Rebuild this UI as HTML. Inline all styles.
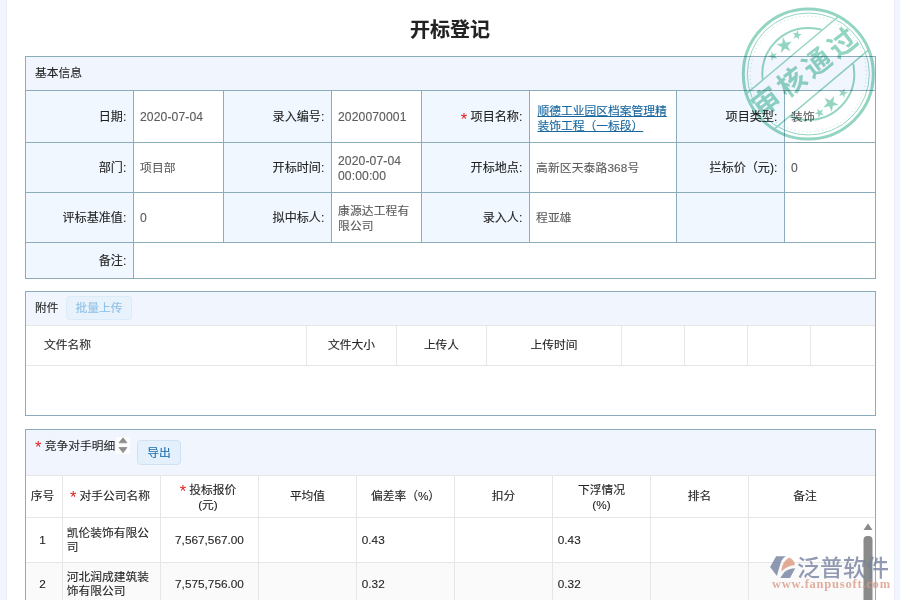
<!DOCTYPE html>
<html lang="zh-CN">
<head>
<meta charset="utf-8">
<title>开标登记</title>
<style>
*{box-sizing:border-box;margin:0;padding:0}
html,body{width:900px;height:600px;overflow:hidden;background:#fff}
body{position:relative;font-family:"Liberation Sans","Noto Sans CJK SC",sans-serif;font-size:11.75px;color:#2a2a2a;line-height:16px;-webkit-text-stroke:0.12px}
.strip-l{position:absolute;left:0;top:0;width:7px;height:600px;background:#f2f5fd;border-right:1px solid #eaedf5}
.strip-r{position:absolute;left:894px;top:0;width:6px;height:600px;background:#f2f5fd;border-left:1px solid #eaedf5}
h1{position:absolute;left:0;top:16px;width:900px;text-align:center;font-size:20px;line-height:28px;font-weight:bold;color:#222}
table{border-collapse:collapse;table-layout:fixed}
#basic{position:absolute;left:25px;top:56px;width:850px}
#basic td{border:1px solid #8badbb;vertical-align:middle;padding:0 6px}
#basic td.hd{background:#f1f5fe;height:34px;padding-left:9px;padding-bottom:2px;color:#262626}
#basic td.lb{background:#f0f7ff;text-align:right;color:#222;padding-right:6.7px;font-size:12.1px;-webkit-text-stroke:0.1px}
#basic td.v{color:#5c5c5c;background:#fff;line-height:15px;letter-spacing:0.15px}
#basic td.n{font-size:12.15px;letter-spacing:0.1px;padding-top:1px}
#basic td.two{padding-top:2px !important}
#basic td.lb .req{vertical-align:-4px}
#basic a{color:#17669f;text-decoration:underline;margin-left:1.5px;display:block;letter-spacing:0}
.req{color:#e02020;font-size:16.5px;line-height:10px;display:inline-block;vertical-align:-3px;margin-right:0;-webkit-text-stroke:0}
.sec{position:absolute;left:25px;width:851px;border:1px solid #8badbb;background:#fff;overflow:hidden}
.sec .bar{background:#f1f5fe;position:relative}
.btn{position:absolute;border:1px solid #d6e6f5;background:#e6f1fc;border-radius:4px;height:24px;line-height:22px;text-align:center;font-size:11.75px}
#att td{border:1px solid #e6e6e6;height:40px;text-align:center;color:#262626;padding:0 0 2px 0}
#comp td{border:1px solid #e6e6e6;text-align:center;color:#262626;vertical-align:middle;padding:0}
#comp td:first-child{padding-right:3px}
#comp td.a{padding-right:3px}
#comp tr.h td{line-height:15px;padding-bottom:1.5px}
#comp tr.h td.t2{padding-top:1px;padding-bottom:0}
#comp td.l{text-align:left;padding-left:3.7px;line-height:13.75px}
#comp td.num{font-size:11.8px;padding-right:0}
</style>
</head>
<body>
<div class="strip-l"></div><div class="strip-r"></div>
<h1>开标登记</h1>

<table id="basic">
<colgroup><col style="width:108px"><col style="width:90px"><col style="width:108px"><col style="width:90px"><col style="width:108px"><col style="width:147px"><col style="width:108px"><col style="width:91px"></colgroup>
<tr><td class="hd" colspan="8">基本信息</td></tr>
<tr style="height:52px"><td class="lb">日期:</td><td class="v n">2020-07-04</td><td class="lb">录入编号:</td><td class="v n">2020070001</td><td class="lb"><span class="req">*</span> 项目名称:</td><td class="v two"><a>顺德工业园区档案管理精装饰工程（一标段）</a></td><td class="lb">项目类型:</td><td class="v">装饰</td></tr>
<tr style="height:50px"><td class="lb">部门:</td><td class="v">项目部</td><td class="lb">开标时间:</td><td class="v n two">2020-07-04 00:00:00</td><td class="lb">开标地点:</td><td class="v">高新区天泰路368号</td><td class="lb">拦标价（元):</td><td class="v n">0</td></tr>
<tr style="height:50px"><td class="lb">评标基准值:</td><td class="v n">0</td><td class="lb">拟中标人:</td><td class="v" style="padding-top:1px">康源达工程有限公司</td><td class="lb">录入人:</td><td class="v">程亚雄</td><td class="lb"></td><td class="v"></td></tr>
<tr style="height:36px"><td class="lb">备注:</td><td class="v" colspan="7"></td></tr>
</table>

<div class="sec" style="top:291px;height:125px">
  <div class="bar" style="height:33px">
    <span style="position:absolute;left:9px;top:8px">附件</span>
    <span class="btn" style="left:40px;top:4.4px;width:66px;color:#8fc0e6;border-color:#dcebf8;background:#e8f2fc">批量上传</span>
  </div>
  <table id="att" style="position:absolute;left:-1px;top:33px;width:850px">
  <colgroup><col style="width:281px"><col style="width:90px"><col style="width:90px"><col style="width:135px"><col style="width:63px"><col style="width:63px"><col style="width:63px"><col style="width:65px"></colgroup>
  <tr><td style="text-align:left;padding-left:18px">文件名称</td><td>文件大小</td><td>上传人</td><td>上传时间</td><td></td><td></td><td></td><td></td></tr>
  </table>
</div>

<div class="sec" style="top:429px;height:200px;border-bottom:none">
  <div class="bar" style="height:45px">
    <span style="position:absolute;left:9px;top:8px"><span class="req">*</span> 竞争对手明细</span>
    <svg style="position:absolute;left:90px;top:7px" width="14" height="17" viewBox="0 0 14 17"><rect width="14" height="17" fill="#fdfdfe"/><path d="M7 0.8 L11 5.8 H3 Z M3 10.5 H11 L7 15.8 Z" fill="#8e8e8e" stroke="#8e8e8e" stroke-width="0.8" stroke-linejoin="round"/></svg>
    <span class="btn" style="left:111px;top:10px;width:44px;height:25px;line-height:23px;color:#1f70ad;border-color:#cfe2f3;background:#e4f0fb">导出</span>
  </div>
  <table id="comp" style="position:absolute;left:-1px;top:45px;width:850px">
  <colgroup><col style="width:37px"><col style="width:98px"><col style="width:98px"><col style="width:98px"><col style="width:98px"><col style="width:98px"><col style="width:98px"><col style="width:98px"><col style="width:127px"></colgroup>
  <tr class="h" style="height:42px"><td>序号</td><td class="a"><span class="req">*</span> 对手公司名称</td><td class="t2 a"><span class="req">*</span> 投标报价<br>(元)</td><td>平均值</td><td>偏差率（%）</td><td>扣分</td><td class="t2">下浮情况<br>(%)</td><td>排名</td><td style="padding-right:14px">备注</td></tr>
  <tr style="height:45px"><td>1</td><td class="l">凯伦装饰有限公司</td><td class="num">7,567,567.00</td><td></td><td class="l" style="padding-left:4.8px">0.43</td><td></td><td class="l" style="padding-left:4.8px">0.43</td><td></td><td></td></tr>
  <tr style="height:43px;background:#fafafa"><td>2</td><td class="l">河北润成建筑装饰有限公司</td><td class="num">7,575,756.00</td><td></td><td class="l" style="padding-left:4.8px">0.32</td><td></td><td class="l" style="padding-left:4.8px">0.32</td><td></td><td></td></tr>
  </table>
</div>

<svg id="stamp" style="position:absolute;left:738px;top:4px;mix-blend-mode:multiply" width="140" height="140" viewBox="0 0 140 140">
 <defs>
  <clipPath id="cpTop"><rect x="0" y="0" width="140" height="45" transform="rotate(-40 70 70)"/></clipPath>
  <clipPath id="cpBot"><rect x="0" y="91" width="140" height="49" transform="rotate(-40 70 70)"/></clipPath>
 </defs>
 <g fill="none" stroke="#93d5c2">
  <circle cx="70.3" cy="70" r="65" stroke-width="3"/>
  <circle cx="70.3" cy="70" r="61" stroke-width="1"/>
  <circle cx="70.3" cy="70" r="58" stroke-width="1" stroke-dasharray="1 3" opacity="0.7"/>
  <circle cx="70.3" cy="70" r="46" stroke-width="2" clip-path="url(#cpTop)"/>
  <circle cx="70.3" cy="70" r="46" stroke-width="2" clip-path="url(#cpBot)"/>
 </g>
 <g transform="rotate(-40 70.3 70)">
  <line x1="10" y1="45.3" x2="130" y2="45.3" stroke="#93d5c2" stroke-width="1.5"/>
  <line x1="8" y1="90.3" x2="132" y2="90.3" stroke="#93d5c2" stroke-width="1.5"/>
 </g>
 <g transform="rotate(-37.5 68 67)">
  <text x="68" y="77" text-anchor="middle" font-family="'Liberation Sans','Noto Sans CJK SC',sans-serif" font-weight="bold" font-size="28" letter-spacing="4" fill="#93d5c2">审核通过</text>
 </g>
 <g fill="#93d5c2">
  <path id="st" d="M0 -1 L0.2245 -0.309 L0.951 -0.309 L0.3633 0.118 L0.5878 0.809 L0 0.382 L-0.5878 0.809 L-0.3633 0.118 L-0.951 -0.309 L-0.2245 -0.309 Z" transform="translate(46.5 41.5) rotate(-10) scale(8.3)"/>
  <path d="M0 -1 L0.2245 -0.309 L0.951 -0.309 L0.3633 0.118 L0.5878 0.809 L0 0.382 L-0.5878 0.809 L-0.3633 0.118 L-0.951 -0.309 L-0.2245 -0.309 Z" transform="translate(35 52) rotate(-20) scale(5)"/>
  <path d="M0 -1 L0.2245 -0.309 L0.951 -0.309 L0.3633 0.118 L0.5878 0.809 L0 0.382 L-0.5878 0.809 L-0.3633 0.118 L-0.951 -0.309 L-0.2245 -0.309 Z" transform="translate(59 31) rotate(10) scale(5)"/>
  <path d="M0 -1 L0.2245 -0.309 L0.951 -0.309 L0.3633 0.118 L0.5878 0.809 L0 0.382 L-0.5878 0.809 L-0.3633 0.118 L-0.951 -0.309 L-0.2245 -0.309 Z" transform="translate(92.5 99.5) rotate(170) scale(8.3)"/>
  <path d="M0 -1 L0.2245 -0.309 L0.951 -0.309 L0.3633 0.118 L0.5878 0.809 L0 0.382 L-0.5878 0.809 L-0.3633 0.118 L-0.951 -0.309 L-0.2245 -0.309 Z" transform="translate(81.5 109) rotate(190) scale(5)"/>
  <path d="M0 -1 L0.2245 -0.309 L0.951 -0.309 L0.3633 0.118 L0.5878 0.809 L0 0.382 L-0.5878 0.809 L-0.3633 0.118 L-0.951 -0.309 L-0.2245 -0.309 Z" transform="translate(105 89) rotate(160) scale(5)"/>
 </g>
</svg>

<svg style="position:absolute;left:862px;top:520px" width="12" height="80" viewBox="0 0 12 80">
 <path d="M6 3.5 L10.5 10 H1.5 Z" fill="#8a8a8a"/>
 <rect x="1.5" y="16" width="9" height="80" rx="4" fill="#8a8a8a"/>
</svg>

<div id="logo" style="position:absolute;left:768px;top:552px;width:132px;height:48px;opacity:0.8;-webkit-text-stroke:0">
 <svg style="position:absolute;left:2px;top:4px" width="26" height="23" viewBox="0 0 26 23">
  <path d="M6.1 0.25 H15.9 C12.5 2.5 10.8 5.5 10.25 8.5 C9 12.5 7.8 16.5 6.9 20.1 L0.1 11.1 Z" fill="#74819f"/>
  <path d="M19.25 1.4 C14 4 11.5 10 11.4 15.6 C15 11.5 20 9.5 24.9 8.9 C24.5 5.5 22.5 2.5 19.25 1.4 Z" fill="#dd987f"/>
  <path d="M14.4 16 C17.5 13.5 21 12.5 25.25 12.25 L20 22 H10.25 Z" fill="#74819f"/>
 </svg>
 <span style="position:absolute;left:29px;top:0.8px;font-size:23px;line-height:30px;color:#76829f;white-space:nowrap;font-weight:500">泛普软件</span>
 <span style="position:absolute;left:4px;top:26px;font-family:'Liberation Serif',serif;font-weight:bold;font-size:12.5px;line-height:12px;color:#dc9a88;white-space:nowrap;letter-spacing:0.78px">www.fanpusoft.com</span>
</div>
</body>
</html>
